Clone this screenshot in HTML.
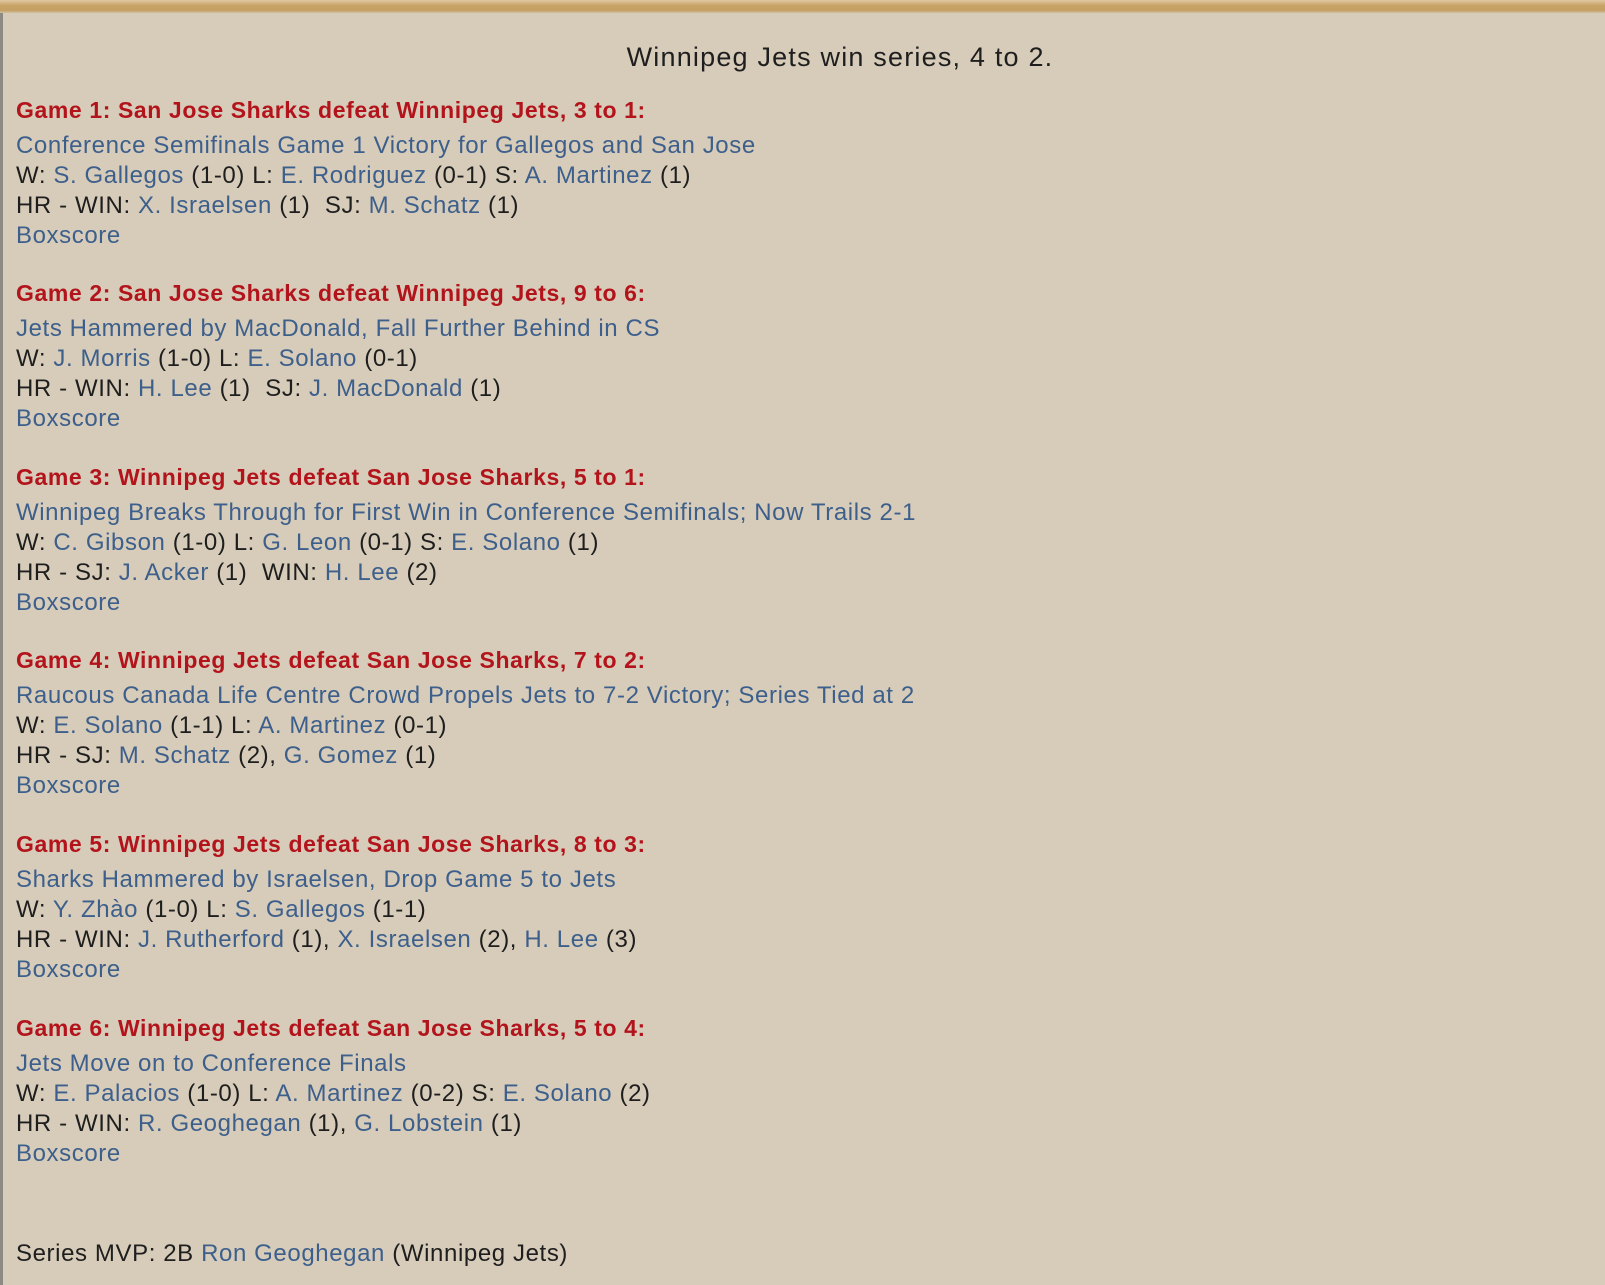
<!DOCTYPE html>
<html><head><meta charset="utf-8"><style>
html,body{margin:0;padding:0}
body{width:1605px;height:1285px;overflow:hidden;background:#d7ccb9;position:relative;font-family:"Liberation Sans",sans-serif;color:#1e1e1e}
.top{position:absolute;left:0;top:0;width:1605px;height:13px;background:linear-gradient(#e2c9a4,#c9a468 40%,#c39f63 80%,#d3c2a4)}
.left{position:absolute;left:0;top:13px;width:3px;height:1272px;background:#8d8a84}
.title{position:absolute;left:0;width:1680px;top:42px;text-align:center;font-size:27px;line-height:30px;letter-spacing:1.2px}
.g{position:absolute;left:16px;font-size:24px;letter-spacing:0.6px}
.g div{line-height:30px;white-space:nowrap}
.h{color:#b3141c;font-weight:bold;margin-bottom:6px;letter-spacing:0.6px;font-size:23px}
a{color:#3d5f8c;text-decoration:none}
</style></head><body>
<div class="top"></div><div class="left"></div>
<div class="title">Winnipeg Jets win series, 4 to 2.</div>

<div class="g" style="top:95px">
<div class="h">Game 1: San Jose Sharks defeat Winnipeg Jets, 3 to 1:</div>
<div><a>Conference Semifinals Game 1 Victory for Gallegos and San Jose</a></div>
<div>W: <a>S. Gallegos</a> (1-0) L: <a>E. Rodriguez</a> (0-1) S: <a>A. Martinez</a> (1)</div>
<div>HR - WIN: <a>X. Israelsen</a> (1)&nbsp; SJ: <a>M. Schatz</a> (1)</div>
<div><a>Boxscore</a></div>
</div>

<div class="g" style="top:278px">
<div class="h">Game 2: San Jose Sharks defeat Winnipeg Jets, 9 to 6:</div>
<div><a>Jets Hammered by MacDonald, Fall Further Behind in CS</a></div>
<div>W: <a>J. Morris</a> (1-0) L: <a>E. Solano</a> (0-1)</div>
<div>HR - WIN: <a>H. Lee</a> (1)&nbsp; SJ: <a>J. MacDonald</a> (1)</div>
<div><a>Boxscore</a></div>
</div>

<div class="g" style="top:462px">
<div class="h">Game 3: Winnipeg Jets defeat San Jose Sharks, 5 to 1:</div>
<div><a>Winnipeg Breaks Through for First Win in Conference Semifinals; Now Trails 2-1</a></div>
<div>W: <a>C. Gibson</a> (1-0) L: <a>G. Leon</a> (0-1) S: <a>E. Solano</a> (1)</div>
<div>HR - SJ: <a>J. Acker</a> (1)&nbsp; WIN: <a>H. Lee</a> (2)</div>
<div><a>Boxscore</a></div>
</div>

<div class="g" style="top:645px">
<div class="h">Game 4: Winnipeg Jets defeat San Jose Sharks, 7 to 2:</div>
<div><a>Raucous Canada Life Centre Crowd Propels Jets to 7-2 Victory; Series Tied at 2</a></div>
<div>W: <a>E. Solano</a> (1-1) L: <a>A. Martinez</a> (0-1)</div>
<div>HR - SJ: <a>M. Schatz</a> (2), <a>G. Gomez</a> (1)</div>
<div><a>Boxscore</a></div>
</div>

<div class="g" style="top:829px">
<div class="h">Game 5: Winnipeg Jets defeat San Jose Sharks, 8 to 3:</div>
<div><a>Sharks Hammered by Israelsen, Drop Game 5 to Jets</a></div>
<div>W: <a>Y. Zhào</a> (1-0) L: <a>S. Gallegos</a> (1-1)</div>
<div>HR - WIN: <a>J. Rutherford</a> (1), <a>X. Israelsen</a> (2), <a>H. Lee</a> (3)</div>
<div><a>Boxscore</a></div>
</div>

<div class="g" style="top:1013px">
<div class="h">Game 6: Winnipeg Jets defeat San Jose Sharks, 5 to 4:</div>
<div><a>Jets Move on to Conference Finals</a></div>
<div>W: <a>E. Palacios</a> (1-0) L: <a>A. Martinez</a> (0-2) S: <a>E. Solano</a> (2)</div>
<div>HR - WIN: <a>R. Geoghegan</a> (1), <a>G. Lobstein</a> (1)</div>
<div><a>Boxscore</a></div>
</div>

<div class="g" style="top:1239px"><div>Series MVP: 2B <a>Ron Geoghegan</a> (Winnipeg Jets)</div></div>
</body></html>
